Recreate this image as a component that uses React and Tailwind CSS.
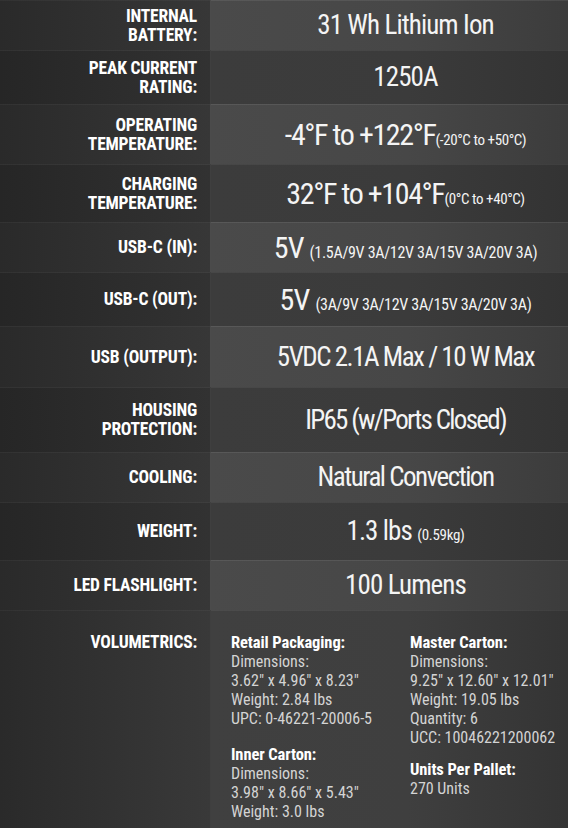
const F = { fontFamily: '"Liberation Sans Narrow", "Roboto Condensed", "Liberation Sans", sans-serif' };

const big = 'text-[30px] tracking-[-1.4px]';
const small = 'text-[15px] tracking-[-0.4px]';

const rows = [
  { h: 'h-[50px]', label: ['INTERNAL', 'BATTERY:'], value: <>31 Wh Lithium Ion</> },
  { h: 'h-[54px]', label: ['PEAK CURRENT', 'RATING:'], value: <>1250A</> },
  { h: 'h-[60px]', label: ['OPERATING', 'TEMPERATURE:'], value: <span className={big}>-4°F to +122°F<span className={small}>(-20°C to +50°C)</span></span> },
  { h: 'h-[58px]', label: ['CHARGING', 'TEMPERATURE:'], value: <span className={big}>32°F to +104°F<span className={small}>(0°C to +40°C)</span></span> },
  { h: 'h-[50px]', label: ['USB-C (IN):'], value: <span className="text-[30px]">5V <span className="text-[16px] tracking-[-0.3px]">(1.5A/9V 3A/12V 3A/15V 3A/20V 3A)</span></span> },
  { h: 'h-[54px]', label: ['USB-C (OUT):'], value: <span className="text-[30px]">5V <span className="text-[16px] tracking-[-0.3px]">(3A/9V 3A/12V 3A/15V 3A/20V 3A)</span></span> },
  { h: 'h-[61px]', label: ['USB (OUTPUT):'], value: <span className="tracking-[-1.5px]">5VDC 2.1A Max / 10 W Max</span> },
  { h: 'h-[65px]', label: ['HOUSING', 'PROTECTION:'], value: <span className="tracking-[-1.7px]">IP65 (w/Ports Closed)</span> },
  { h: 'h-[50px]', label: ['COOLING:'], value: <span className="tracking-[-1.5px]">Natural Convection</span> },
  { h: 'h-[58px]', label: ['WEIGHT:'], value: <>1.3 lbs <span className="text-[15px] tracking-[-0.3px]">(0.59kg)</span></> },
  { h: 'h-[50px]', label: ['LED FLASHLIGHT:'], value: <>100 Lumens</> },
];

function Row({ r, light }) {
  return (
    <div className={`flex ${r.h}`}>
      <div
        className={`w-[210px] shrink-0 flex flex-col justify-center items-end pr-[13px] border-t ${
          light
            ? 'bg-[linear-gradient(to_right,#2a2a2a,#373737)] border-white/[0.04]'
            : 'bg-[linear-gradient(to_right,#262626,#323232)] border-white/[0.06]'
        }`}
      >
        {r.label.map((l, i) => (
          <div key={i} className="text-[17.5px] leading-[19px] font-bold text-white text-right whitespace-nowrap tracking-[-0.2px]">
            {l}
          </div>
        ))}
      </div>
      <div
        className={`flex-1 flex items-center justify-center pl-[32px] border-l border-t ${
          light
            ? 'bg-[linear-gradient(to_right,#4a4a4a,#474747_55%,#3c3c3c)] border-white/[0.08]'
            : 'bg-[linear-gradient(to_right,#3c3c3c,#3b3b3b_55%,#333333)] border-white/[0.06]'
        }`}
      >
        <div className="text-[27px] leading-none text-[#f4f4f4] whitespace-nowrap tracking-[-0.9px]">{r.value}</div>
      </div>
    </div>
  );
}

function Block({ title, lines, className = '' }) {
  return (
    <div className={className}>
      <div className="text-[16.5px] leading-[19px] font-bold text-white tracking-[-0.1px]">{title}</div>
      {lines.map((l, i) => (
        <div key={i} className="text-[16px] leading-[19px] text-[#d4d4d4]">{l}</div>
      ))}
    </div>
  );
}

export default function App() {
  return (
    <div style={F} className="w-[568px] h-[828px] overflow-hidden bg-[#333]">
      {rows.map((r, i) => (
        <Row key={i} r={r} light={i % 2 === 0} />
      ))}
      <div className="flex h-[218px]">
        <div className="w-[210px] shrink-0 pr-[13px] pt-[22px] flex justify-end bg-[linear-gradient(to_right,#2a2a2a,#393939)] border-t border-white/[0.04]">
          <div className="text-[17.5px] leading-[19px] font-bold text-white tracking-[-0.2px]">VOLUMETRICS:</div>
        </div>
        <div className="flex-1 flex pl-[20px] pt-[22px] border-l border-t border-white/[0.06] bg-[linear-gradient(to_right,#404040,#3f3f3f_55%,#343434)]">
          <div className="w-[179px] shrink-0">
            <Block title="Retail Packaging:" lines={['Dimensions:', '3.62" x 4.96" x 8.23"', 'Weight: 2.84 lbs', 'UPC: 0-46221-20006-5']} />
            <Block className="mt-[17px]" title="Inner Carton:" lines={['Dimensions:', '3.98" x 8.66" x 5.43"', 'Weight: 3.0 lbs']} />
          </div>
          <div>
            <Block title="Master Carton:" lines={['Dimensions:', '9.25" x 12.60" x 12.01"', 'Weight: 19.05 lbs', 'Quantity: 6', 'UCC: 10046221200062']} />
            <Block className="mt-[13px]" title="Units Per Pallet:" lines={['270 Units']} />
          </div>
        </div>
      </div>
    </div>
  );
}
